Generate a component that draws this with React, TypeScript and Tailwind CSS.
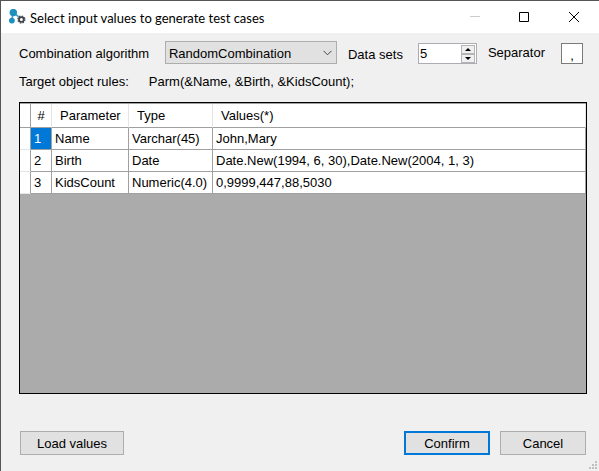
import { useState } from "react";

const rows = [
  { name: "Name", type: "Varchar(45)", values: "John,Mary" },
  { name: "Birth", type: "Date", values: "Date.New(1994, 6, 30),Date.New(2004, 1, 3)" },
  { name: "KidsCount", type: "Numeric(4.0)", values: "0,9999,447,88,5030" },
];

function AppIcon() {
  return (
    <svg width="17" height="16" viewBox="0 0 17 16" aria-hidden="true">
      <path d="M4.2 3.6 2.7 11.3M4.2 3.6l6 4.6" stroke="#3f9fc6" strokeWidth="1.6" />
      <circle cx="4.3" cy="3.6" r="3.7" fill="#1a8fc0" />
      <circle cx="2.9" cy="11.6" r="2.9" fill="#1a8fc0" />
      <circle cx="12.4" cy="10.5" r="2.4" fill="#fff" stroke="#40464c" strokeWidth="1.8" />
      <circle cx="12.4" cy="10.5" r="3.5" fill="none" stroke="#40464c" strokeWidth="1.3" strokeDasharray="1.4 1.35" />
    </svg>
  );
}

function TitleBar() {
  return (
    <header className="flex h-8 shrink-0 items-center bg-white pl-2 font-[Lato,'Open_Sans',sans-serif]">
      <AppIcon />
      <h1 className="ml-1 flex-1 whitespace-nowrap pt-px text-[13px] leading-4">
        Select input values to generate test cases
      </h1>
      <button aria-label="Minimize" disabled className="flex h-8 w-12 items-center justify-center">
        <svg width="10" height="10" viewBox="0 0 10 10">
          <path d="M0 4.5h10" stroke="#cccccc" />
        </svg>
      </button>
      <button aria-label="Maximize" className="flex h-8 w-[50px] items-center justify-center">
        <svg width="10" height="10" viewBox="0 0 10 10">
          <path d="M.5.5h9v9h-9z" fill="none" stroke="#000" />
        </svg>
      </button>
      <button aria-label="Close" className="flex h-8 w-[50px] items-center justify-center">
        <svg width="10" height="10" viewBox="0 0 10 10">
          <path d="M0 0l10 10M10 0 0 10" stroke="#000" />
        </svg>
      </button>
    </header>
  );
}

function DataSets() {
  const [count, setCount] = useState(5);
  const step = "flex h-[9px] w-[14px] items-center justify-center border border-[#b4b4b4] bg-[#f0f0f0]";
  return (
    <div className="flex h-[21px] w-[59px] items-center border border-[#abadb3] bg-white pr-px">
      <input
        id="sets"
        type="number"
        value={count}
        onChange={(e) => setCount(Number(e.target.value))}
        className="w-full min-w-0 flex-1 appearance-none pl-px outline-none [-moz-appearance:textfield] [&::-webkit-inner-spin-button]:appearance-none"
      />
      <div className="flex flex-col">
        <button aria-label="More" className={step} onClick={() => setCount(count + 1)}>
          <svg width="6" height="3" viewBox="0 0 6 3">
            <path d="M0 3 3 0l3 3z" />
          </svg>
        </button>
        <button aria-label="Fewer" className={step} onClick={() => setCount(count - 1)}>
          <svg width="6" height="3" viewBox="0 0 6 3">
            <path d="M0 0h6L3 3z" />
          </svg>
        </button>
      </div>
    </div>
  );
}

export default function App() {
  const [separator, setSeparator] = useState(",");
  const head = "h-6 border-r border-b border-r-[#e5e5e5] border-b-[#a0a0a0] p-0 pl-2 text-left font-normal";
  const cell = "h-[22px] border-r border-b border-[#a0a0a0] p-0 pl-[3px]";
  const button = "h-6 border-[#adadad] bg-[#e1e1e1] pt-px";
  return (
    <div className="relative flex min-h-screen flex-col border-t border-l border-[#555] bg-[#f0f0f0] font-['Liberation_Sans',Arial,sans-serif] text-[13px] leading-4 text-black">
      <TitleBar />
      <main className="flex flex-1 flex-col pt-2 pr-3 pb-4 pl-[18px]">
        <div className="flex items-end pr-1 whitespace-nowrap">
          <label htmlFor="algorithm" className="pb-0.5">Combination algorithm</label>
          <div className="relative mr-[11px] ml-auto w-[172px]">
            <select
              id="algorithm"
              className="block h-[23px] w-full appearance-none border border-[#adadad] bg-[#e1e1e1] pt-0.5 pl-[3px] outline-none"
            >
              <option>RandomCombination</option>
            </select>
            <svg className="pointer-events-none absolute top-[9px] right-[5px]" width="9" height="6" viewBox="0 0 9 6">
              <path d="M.5.8l4 4 4-4" fill="none" stroke="#444" />
            </svg>
          </div>
          <label htmlFor="sets" className="mr-[15px] pb-px">Data sets</label>
          <DataSets />
          <label htmlFor="separator" className="mr-4 ml-[11px] pb-[3px]">Separator</label>
          <input
            id="separator"
            value={separator}
            onChange={(e) => setSeparator(e.target.value)}
            className="h-[21px] w-[22px] border border-[#7a7a7a] bg-white pt-1 text-center outline-none"
          />
        </div>
        <p className="mt-[10px] flex gap-5 whitespace-nowrap">
          <span>Target object rules:</span>
          <span>Parm(&amp;Name, &amp;Birth, &amp;KidsCount);</span>
        </p>
        <div className="mt-3 flex-1 border border-black bg-[#ababab]">
          <table className="w-full table-fixed border-separate border-spacing-0 border-t border-[#a0a0a0] bg-white whitespace-nowrap">
            <colgroup>
              <col className="w-[11px]" />
              <col className="w-[21px]" />
              <col className="w-[77px]" />
              <col className="w-[84px]" />
              <col />
            </colgroup>
            <thead>
              <tr>
                <th className="border-r border-b border-[#a0a0a0] p-0" />
                <th className="border-r border-b border-r-[#e5e5e5] border-b-[#a0a0a0] p-0 font-normal">#</th>
                <th className={head}>Parameter</th>
                <th className={head}>Type</th>
                <th className={head}>Values(*)</th>
              </tr>
            </thead>
            <tbody>
              {rows.map((row, i) => (
                <tr key={row.name}>
                  <td className="border-r border-b border-r-[#a0a0a0] border-b-[#e5e5e5] p-0" />
                  <td className={i === 0 ? `${cell} bg-[#0078d7] text-white` : cell}>{i + 1}</td>
                  <td className={cell}>{row.name}</td>
                  <td className={cell}>{row.type}</td>
                  <td className={cell}>{row.values}</td>
                </tr>
              ))}
            </tbody>
          </table>
        </div>
        <footer className="mt-[37px] flex gap-[10px] pr-px pl-px">
          <button className={`${button} mr-auto w-[104px] border`}>Load values</button>
          <button className="h-6 w-[86px] border-2 border-[#0078d7] bg-[#e1e1e1] pt-px">Confirm</button>
          <button className={`${button} w-[86px] border`}>Cancel</button>
        </footer>
      </main>
      <svg className="absolute right-0.5 bottom-0.5" width="8" height="8" viewBox="0 0 8 8" fill="#bfbfbf">
        <path d="M6 0h2v2H6zM3 3h2v2H3zM6 3h2v2H6zM0 6h2v2H0zM3 6h2v2H3zM6 6h2v2H6z" />
      </svg>
    </div>
  );
}
